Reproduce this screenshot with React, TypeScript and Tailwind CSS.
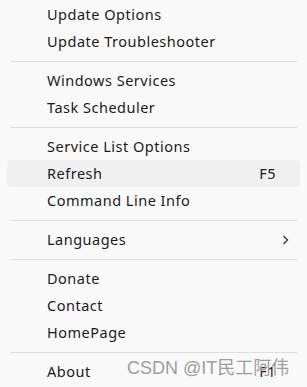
import React from "react";

type Item = { label: string; shortcut?: string; sub?: boolean; active?: boolean };

const groups: Item[][] = [
  [{ label: "Update Options" }, { label: "Update Troubleshooter" }],
  [{ label: "Windows Services" }, { label: "Task Scheduler" }],
  [
    { label: "Service List Options" },
    { label: "Refresh", shortcut: "F5", active: true },
    { label: "Command Line Info" },
  ],
  [{ label: "Languages", sub: true }],
  [{ label: "Donate" }, { label: "Contact" }, { label: "HomePage" }],
  [{ label: "About", shortcut: "F1" }],
];

function Row({ item }: { item: Item }) {
  return (
    <div
      className={`mx-[7px] h-[27px] flex items-center pl-[40px] pr-[11px] rounded-[4px] ${
        item.active ? "bg-[#f0f0f0]" : ""
      }`}
    >
      <span className="flex-1">{item.label}</span>
      {item.shortcut && <span className="mr-[13px]">{item.shortcut}</span>}
      {item.sub && (
        <svg width="7" height="10" viewBox="0 0 7 10">
          <path d="M1.5 1 L5.5 5 L1.5 9" fill="none" stroke="#333" strokeWidth="1.3" />
        </svg>
      )}
    </div>
  );
}

export default function App() {
  return (
    <div
      className="relative w-[307px] h-[387px] overflow-hidden bg-[#f9f9f9] text-[14.5px] tracking-[0.5px] text-[#1b1b1b]"
      style={{ fontFamily: '"Noto Sans", "Open Sans", sans-serif' }}
    >
      <div className="pt-px">
        {groups.map((g, gi) => (
          <div key={gi}>
            {gi > 0 && <div className="mx-[10px] mt-[6px] mb-[5px] h-px bg-[#dedede]" />}
            {g.map((it) => (
              <Row key={it.label} item={it} />
            ))}
          </div>
        ))}
      </div>
      <div
        className="absolute left-[127px] top-[359px] text-[18px] leading-none text-[#9e9e9e] whitespace-nowrap tracking-normal"
        style={{ fontFamily: '"Liberation Sans", "Noto Sans CJK SC", sans-serif' }}
      >
        CSDN @IT民工阿伟
      </div>
    </div>
  );
}
